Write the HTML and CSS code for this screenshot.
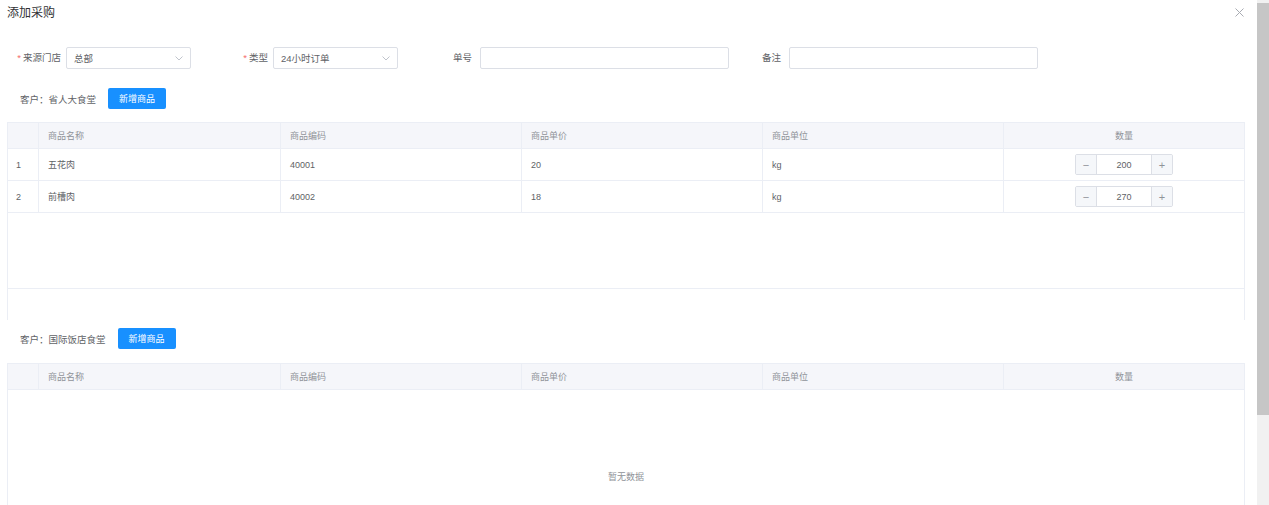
FILE: index.html
```html
<!DOCTYPE html>
<html lang="zh">
<head>
<meta charset="utf-8">
<title>添加采购</title>
<link rel="stylesheet" href="styles.css">
</head>
<body>
<div class="viewport">
<div class="page">
  <div class="dialog-header">
    <span class="dialog-title">添加采购</span>
    <svg class="close" width="9" height="9" viewBox="0 0 9 9"><path d="M0.5 0.5 L8.5 8.5 M8.5 0.5 L0.5 8.5" stroke="#a8abb2" stroke-width="1" fill="none"/></svg>
  </div>

  <div class="form-row">
    <div class="form-item item-store">
      <label class="form-label"><span class="req">*</span>来源门店</label>
      <div class="select w125"><span>总部</span><svg width="8" height="5" viewBox="0 0 8 5"><path d="M0.5 0.5 L4 4 L7.5 0.5" stroke="#c0c4cc" fill="none"/></svg></div>
    </div>
    <div class="form-item item-type">
      <label class="form-label"><span class="req">*</span>类型</label>
      <div class="select w125"><span>24小时订单</span><svg width="8" height="5" viewBox="0 0 8 5"><path d="M0.5 0.5 L4 4 L7.5 0.5" stroke="#c0c4cc" fill="none"/></svg></div>
    </div>
    <div class="form-item item-no">
      <label class="form-label">单号</label>
      <div class="input w250"></div>
    </div>
    <div class="form-item item-note">
      <label class="form-label">备注</label>
      <div class="input w250"></div>
    </div>
  </div>

  <div class="customer-row first">
    <span class="customer">客户：省人大食堂</span>
    <button class="btn">新增商品</button>
  </div>

  <div class="table table-one">
    <div class="tr th">
      <div class="cell"></div>
      <div class="cell">商品名称</div>
      <div class="cell">商品编码</div>
      <div class="cell">商品单价</div>
      <div class="cell">商品单位</div>
      <div class="cell center">数量</div>
    </div>
    <div class="tr td">
      <div class="cell">1</div>
      <div class="cell">五花肉</div>
      <div class="cell">40001</div>
      <div class="cell">20</div>
      <div class="cell">kg</div>
      <div class="cell center">
        <div class="num-input"><span class="num-btn">−</span><span class="num-val">200</span><span class="num-btn">+</span></div>
      </div>
    </div>
    <div class="tr td">
      <div class="cell">2</div>
      <div class="cell">前槽肉</div>
      <div class="cell">40002</div>
      <div class="cell">18</div>
      <div class="cell">kg</div>
      <div class="cell center">
        <div class="num-input"><span class="num-btn">−</span><span class="num-val">270</span><span class="num-btn">+</span></div>
      </div>
    </div>
    <div class="table-filler"></div>
    <div class="table-tail"></div>
  </div>

  <div class="customer-row second">
    <span class="customer">客户：国际饭店食堂</span>
    <button class="btn">新增商品</button>
  </div>

  <div class="table table-two">
    <div class="tr th">
      <div class="cell"></div>
      <div class="cell">商品名称</div>
      <div class="cell">商品编码</div>
      <div class="cell">商品单价</div>
      <div class="cell">商品单位</div>
      <div class="cell center">数量</div>
    </div>
    <div class="empty">暂无数据</div>
  </div>
</div>
<div class="scrollbar"><div class="thumb"></div></div>
</div>
</body>
</html>
```

FILE: styles.css
```css
html, body {
  margin: 0;
  padding: 0;
  background: #ffffff;
}

body {
  font-family: "Liberation Sans", "Noto Sans CJK SC", sans-serif;
  color: #606266;
}

.viewport {
  display: flex;
  height: 505px;
  overflow: hidden;
}

.page {
  width: 1257px;
  flex: none;
  box-sizing: border-box;
  padding: 0 12px 0 7px;
}

.scrollbar {
  width: 12px;
  flex: none;
  background: #f1f1f1;
  padding-top: 3px;
  box-sizing: border-box;
}
.thumb {
  height: 412px;
  background: #c6c6c6;
}

.dialog-header {
  height: 26px;
  display: flex;
  align-items: center;
  justify-content: space-between;
  padding-right: 1px;
}

.dialog-title {
  font-size: 12px;
  line-height: 16px;
  color: #303133;
  margin-top: -1px;
}

.close {
  display: block;
  margin-top: -2px;
}

.form-row {
  margin-top: 21px;
  display: flex;
  align-items: center;
  height: 22px;
}

.form-item {
  display: flex;
  align-items: center;
}

.form-label {
  font-size: 9.5px;
  line-height: 22px;
  color: #606266;
  text-align: right;
  padding-right: 5px;
  box-sizing: border-box;
  white-space: nowrap;
}

.item-store .form-label { width: 59px; }
.item-type .form-label { width: 82px; }
.item-no .form-label { width: 82px; padding-right: 8px; }
.item-note .form-label { width: 60px; padding-right: 8px; }

.req {
  color: #f56c6c;
  margin-right: 2px;
}

.select, .input {
  height: 22px;
  box-sizing: border-box;
  border: 1px solid #dcdfe6;
  border-radius: 2px;
  background: #fff;
}

.select {
  display: flex;
  align-items: center;
  justify-content: space-between;
  padding: 0 7px 0 7px;
  font-size: 9.5px;
  color: #606266;
}

.w125 { width: 125px; }
.w250 { width: 249px; }

.customer-row {
  display: flex;
  align-items: center;
  height: 21px;
  padding-left: 13px;
}
.customer-row.first { margin-top: 19px; }
.customer-row.second { margin-top: 8px; }

.customer {
  font-size: 9.5px;
  color: #606266;
  margin-right: 12px;
}

.btn {
  height: 21px;
  width: 58px;
  border: none;
  border-radius: 2px;
  background: #1890ff;
  color: #fff;
  font-family: inherit;
  font-size: 9px;
  padding: 0;
}

.table {
  margin-top: 13px;
  border-left: 1px solid #ebeef5;
  border-right: 1px solid #ebeef5;
  width: 1238px;
  box-sizing: border-box;
}
.table-two { margin-top: 14px; }

.tr {
  display: grid;
  grid-template-columns: 31px 242px 241px 241px 241px 1fr;
  border-bottom: 1px solid #ebeef5;
}

.th {
  height: 27px;
  background: #f5f6fa;
  border-top: 1px solid #ebeef5;
  color: #909399;
  box-sizing: border-box;
}

.td {
  height: 32px;
  box-sizing: border-box;
  color: #606266;
}

.cell {
  font-size: 9px;
  display: flex;
  align-items: center;
  padding-left: 9px;
  border-right: 1px solid #ebeef5;
  box-sizing: border-box;
}
.cell:first-child { padding-left: 8px; }
.cell:last-child { border-right: none; }
.cell.center {
  justify-content: center;
  padding-left: 0;
}

.num-input {
  display: flex;
  width: 98px;
  height: 21px;
  box-sizing: border-box;
  border: 1px solid #dcdfe6;
  border-radius: 2px;
  overflow: hidden;
}
.num-btn {
  width: 20px;
  background: #f5f7fa;
  color: #909399;
  font-size: 11px;
  display: flex;
  align-items: center;
  justify-content: center;
}
.num-btn:first-child { border-right: 1px solid #dcdfe6; }
.num-btn:last-child { border-left: 1px solid #dcdfe6; }
.num-val {
  flex: 1;
  display: flex;
  align-items: center;
  justify-content: center;
  font-size: 9px;
  color: #606266;
}

.table-filler {
  height: 75px;
  border-bottom: 1px solid #ebeef5;
}
.table-tail {
  height: 31px;
}

.empty {
  height: 230px;
  box-sizing: border-box;
  padding-top: 81px;
  text-align: center;
  font-size: 9px;
  line-height: 12px;
  color: #909399;
}
```
